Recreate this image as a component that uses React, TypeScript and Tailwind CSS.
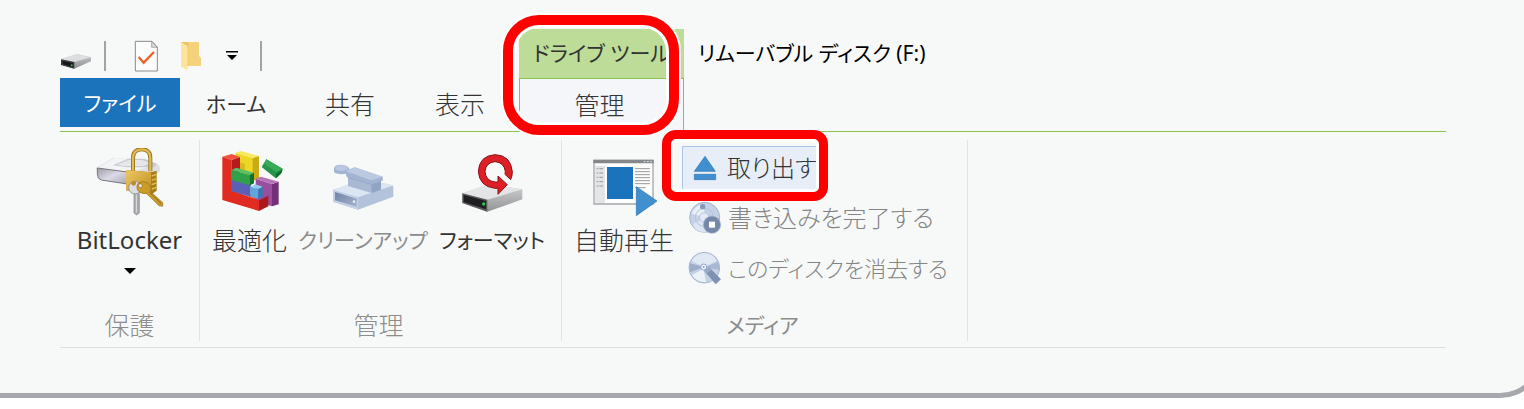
import type { ReactNode } from 'react';
import { clsx } from 'clsx';

const DriveSmallIcon = () => (
  <svg width="32" height="20" viewBox="33 64 96 60" aria-hidden="true">
    <defs>
      <linearGradient id="small-side" x1="0" x2="0" y1="0" y2="1">
        <stop offset="0" stopColor="#c9c9cb" />
        <stop offset="1" stopColor="#8f8f92" />
      </linearGradient>
    </defs>
    <path d="M36 86 84 70l42 10v12L76 114 36 103Z" fill="url(#small-side)" />
    <path d="M36 86 84 70l42 10-50 14Z" fill="#dddee0" />
    <path d="M36 86l40 8v20l-40-11Z" fill="#3c3c3e" />
    <path d="M41 91l31 7v11l-31-9Z" fill="#161616" />
    <circle cx="68" cy="104" r="3" fill="#2fb457" />
  </svg>
);

const DocumentCheckIcon = () => (
  <svg width="24" height="32" viewBox="247 31 72 96" aria-hidden="true">
    <path d="M251 35h50l16 17v72h-66Z" fill="#fcfcfc" stroke="#8b8b8b" strokeWidth="3" />
    <path d="M300 36v17h17Z" fill="#dcdcdc" stroke="#8b8b8b" strokeWidth="2" />
    <path d="M261 82l15 17 31-32" fill="none" stroke="#e8642c" strokeWidth="7" />
  </svg>
);

const FolderIcon = () => (
  <svg width="22" height="30" viewBox="387 38 66 90" aria-hidden="true">
    <path d="M390 41h53v42l6 5v25h-46l-13 2Z" fill="#ecc35c" />
    <path d="M412 41h31v42l6 5v25h-37Z" fill="#f3d27b" />
    <path d="M390 41l20 13v67l-3 5-17-12Z" fill="#fae49e" />
  </svg>
);

const BitLockerIcon = () => (
  <svg width="72" height="68" viewBox="40 24 216 204" aria-hidden="true">
    <defs>
      <linearGradient id="bl-front" x1="0" x2="1" y1="0" y2="1">
        <stop offset="0" stopColor="#9b9aa3" />
        <stop offset="0.5" stopColor="#dcdae8" />
        <stop offset="1" stopColor="#a7a6b0" />
      </linearGradient>
      <linearGradient id="bl-gold" x1="0" x2="1" y1="0" y2="1">
        <stop offset="0" stopColor="#ecc863" />
        <stop offset="1" stopColor="#bf8d20" />
      </linearGradient>
    </defs>
    <path d="M48 84 98 54l92 4 46 18 3 20-100 32-86-12Z" fill="#dfe0e3" />
    <path d="M48 84 98 54l92 4 40 16-90 24Z" fill="#f3f4f5" />
    <path d="M48 84 98 54" fill="none" stroke="#b9babd" strokeWidth="2" strokeDasharray="3 5" />
    <path d="M96 76l46-20h50l38 16-10 10h-80Z" fill="#c9cbd0" />
    <path d="M108 74l36-14h40l24 10-20 8h-60Z" fill="#e6e7ea" />
    <path d="M50 84l90 12v36l-78-12q-12-3-12-18Z" fill="url(#bl-front)" stroke="#77767e" strokeWidth="3" />
    <path d="M157 94V55q0-27 26-27t26 27v39" fill="none" stroke="#96701c" strokeWidth="12" />
    <path d="M157 94V55q0-27 26-27t26 27v39" fill="none" stroke="#e0ba52" strokeWidth="7" />
    <path d="M136 90l75 7 17-5v60l-17 12-75-13Z" fill="#a97c1a" />
    <path d="M136 90l75 7v67l-75-13Z" fill="url(#bl-gold)" />
    <path d="M213 108l14-5M213 121l14-5M213 134l14-5M213 147l14-5" stroke="#e3bd55" strokeWidth="4" />
    <path d="M160 158v61l8 6 8-6v-58Z" fill="#a9aaad" stroke="#85868a" strokeWidth="2" />
    <path d="M167 162v56" stroke="#e2e3e5" strokeWidth="3" />
    <circle cx="163" cy="143" r="19" fill="#dddee1" stroke="#96979b" strokeWidth="3" />
    <circle cx="159" cy="130" r="7" fill="#b98a26" />
    <path d="M172 130q12-10 27-2 14 8 11 27l36 33v11l-11-2-38-37q-19 2-27-11-4-10 2-19Z" fill="#cc9c2a" stroke="#94701a" strokeWidth="2" />
    <path d="M206 156l36 35" stroke="#8b6410" strokeWidth="3" />
    <circle cx="179" cy="137" r="6" fill="#e9e6da" stroke="#94701a" strokeWidth="2" />
  </svg>
);

const OptimizeIcon = () => (
  <svg width="72" height="68" viewBox="27 24 216 204" aria-hidden="true">
    <path d="M92 38l52 16v70l-52-16Z" fill="#eed627" />
    <path d="M143 54l19-6v66l-19 10Z" fill="#c8ab16" />
    <path d="M92 38l16-5 54 15-19 6Z" fill="#f8e95e" />
    <path d="M96 64l24 8v22H96Z" fill="#d6bb1b" />
    <path d="M79 60l26-9v100H79Z" fill="#b51a1c" />
    <path d="M52 50l28-8 25 9-26 9Z" fill="#f0533a" />
    <path d="M110 160l62 12 18-6-28 16Z" fill="#f0533a" />
    <path d="M152 116l49 16v67l-49-14Z" fill="#9a4f9e" />
    <path d="M201 132l20-7v68l-20 6Z" fill="#743078" />
    <path d="M152 116l16-6 53 15-20 7Z" fill="#b873b8" />
    <path d="M52 50l27 10v91l83 30v32L52 180Z" fill="#df2b20" />
    <path d="M162 181l28-14v32l-28 14Z" fill="#aa191d" />
    <path d="M78 118l59 16v36l-59-17Z" fill="#5a5fb8" />
    <path d="M137 140l23 7v29l-23-6Z" fill="#5aa8dc" />
    <path d="M160 146l13-6v31l-13 6Z" fill="#3479b5" />
    <path d="M137 140l14-7 22 7-13 7Z" fill="#8ecbef" />
    <path d="M79 90l54 14v32l-54-16Z" fill="#2fa14b" />
    <path d="M133 104l14-6v32l-14 7Z" fill="#14702f" />
    <path d="M79 90l15-7 53 15-14 6Z" fill="#5abf66" />
    <path d="M170 81l14-23 49 28-4 13-17 16Z" fill="#25964a" />
    <path d="M212 102l21-14-4 12-15 15Z" fill="#126d31" />
    <path d="M184 58l49 28-19 10-36-24Z" fill="#37ab58" />
  </svg>
);

const CleanupIcon = () => (
  <svg width="72" height="68" viewBox="27 24 216 204" aria-hidden="true">
    <defs>
      <linearGradient id="cl-front" x1="0" x2="1" y1="0" y2="1">
        <stop offset="0" stopColor="#7183a5" />
        <stop offset="1" stopColor="#a4b3ce" />
      </linearGradient>
    </defs>
    <path d="M45 150l76-26 90 8 15 6v32l-106 39-75-24Z" fill="#b4c3dc" />
    <path d="M45 150l76-26 90 8 13 5-104 35Z" fill="#dce5f2" />
    <path d="M45 150l75 22v37l-75-24Z" fill="#c3cfe3" />
    <path d="M51 156l65 20v24l-65-19Z" fill="url(#cl-front)" />
    <circle cx="108" cy="185" r="4" fill="#e4ecf8" />
    <path d="M90 106l70 20 29-6v29l-28 10-71-21Z" fill="#aab9d3" />
    <path d="M160 126l29-6v29l-28 10Z" fill="#92a4c4" />
    <path d="M90 106l70 20v8l-70-20Z" fill="#8ea1c2" />
    <path d="M48 84q2-10 22-10 20 1 25 14l15-6 84 28v12l-34 11-74-22-3-10-14 2q-22-2-21-9Z" fill="#a3b4d2" />
    <path d="M83 94l27-12 84 28-34 11Z" fill="#bccae1" />
    <ellipse cx="70" cy="84" rx="19" ry="9" fill="#b9c8e0" />
  </svg>
);

const FormatIcon = () => (
  <svg width="72" height="68" viewBox="402 24 216 204" aria-hidden="true">
    <defs>
      <linearGradient id="fm-side" x1="0" x2="0" y1="0" y2="1">
        <stop offset="0" stopColor="#d2d3d4" />
        <stop offset="1" stopColor="#929395" />
      </linearGradient>
    </defs>
    <path d="M421 160l80-27 100 15v30l-105 37-75-26Z" fill="url(#fm-side)" />
    <path d="M421 160l80-27 100 15-105 31Z" fill="#e3e4e5" />
    <path d="M421 160l75 19v36l-75-26Z" fill="#58585a" />
    <path d="M425 165l67 18v25l-67-22Z" fill="#1e1e20" />
    <circle cx="485" cy="192" r="5" fill="#2fc54b" />
    <path
      d="M549 103l17 16q5-10 5-24-5-50-52-51-47 3-50 50 3 46 50 51h9v18l28-29-28-26v18h-9q-28-3-30-32 3-27 30-29 27 2 31 29Z"
      fill="#dc2026"
      stroke="#8e1115"
      strokeWidth="3"
      strokeLinejoin="round"
    />
  </svg>
);

const AutoPlayIcon = () => (
  <svg width="72" height="68" viewBox="87 84 216 204" aria-hidden="true">
    <path d="M105 121h177v131H105Z" fill="#fdfdfd" stroke="#a5a7aa" strokeWidth="4" />
    <path d="M103 119h181v11H103Z" fill="#85888b" />
    <path d="M254 125h5M264 125h5M274 125h5" stroke="#eee" strokeWidth="3" />
    <path d="M108 137h30v112h-30Z" fill="#e3e5e6" />
    <path d="M113 146h5M121 146h11M113 159h5M121 159h11M113 172h5M121 172h11M113 185h5M121 185h11M113 198h5M121 198h11" stroke="#95989b" strokeWidth="3" />
    <path d="M228 146h45M228 155h45M228 164h45M228 173h45M228 182h45M228 191h45M228 203h32" stroke="#96989a" strokeWidth="3" />
    <path d="M144 141h78v96h-78Z" fill="#1b73bb" />
    <path d="M232 200l62 43-62 44Z" fill="#428fcf" stroke="#2b74b5" strokeWidth="2" />
  </svg>
);

const EjectIcon = () => (
  <svg width="24" height="26" viewBox="397 105 72 78" aria-hidden="true">
    <path d="M433 109l31 45h-63ZM401 163h64v16h-64Z" fill="#428fcf" stroke="#2b74b5" strokeWidth="2" />
  </svg>
);

const FinishBurnIcon = () => (
  <svg width="34" height="34" viewBox="53 36 102 102" aria-hidden="true">
    <circle cx="103" cy="85" r="45" fill="#c5d2e6" stroke="#a5b4cf" strokeWidth="3" />
    <path d="M64 74q10-26 36-29l3 40Z" fill="#e8eff8" />
    <path d="M107 130q-30 2-40-24l32-16Z" fill="#dde6f2" />
    <circle cx="102" cy="85" r="27" fill="none" stroke="#b6c4da" strokeWidth="3" />
    <circle cx="102" cy="85" r="14" fill="#e3eaf5" stroke="#b6c4da" strokeWidth="3" />
    <circle cx="97" cy="53" r="8" fill="#8497b8" />
    <circle cx="125" cy="107" r="26" fill="#7688aa" stroke="#a7b5ce" strokeWidth="2" />
    <path d="M116 98h18v18h-18Z" fill="#fff" />
  </svg>
);

const EraseDiscIcon = () => (
  <svg width="34" height="34" viewBox="52 183 102 102" aria-hidden="true">
    <circle cx="101" cy="233" r="46" fill="#c5d2e6" stroke="#a5b4cf" strokeWidth="3" />
    <path d="M63 213q14-24 38-24 25 1 37 23l-37 20Z" fill="#dfe8f3" />
    <path d="M58 220l43 11-42 16q-5-13-1-27Z" fill="#9eafcb" />
    <path d="M142 216l-41 15 44 9q3-12-3-24Z" fill="#a9b9d3" />
    <path d="M64 255l34-18 8 39q-28 2-42-21Z" fill="#edf2f9" />
    <circle cx="99" cy="231" r="9" fill="#f5f8fc" stroke="#91a3c1" strokeWidth="3" />
    <circle cx="99" cy="231" r="3" fill="#8496b5" />
    <path d="M101 243l14-12 36 37-16 15Z" fill="#7f92b3" />
    <path d="M101 243l14-12 8 8-16 12Z" fill="#9babc7" />
  </svg>
);

const Separator = () => <span className="h-[30px] w-0.5 bg-[#a3a3a3]" />;

// kanji labels are light at 25px, kana labels regular at 21px
const kanjiText = 'text-[25px] font-light';
const kanaText = 'text-[21px] font-normal';

type RibbonButtonProps = {
  icon: ReactNode;
  label: string;
  text?: string;
  disabled?: boolean;
  menu?: boolean;
};

const RibbonButton = ({ icon, label, text = kanjiText, disabled, menu }: RibbonButtonProps) => (
  <button
    type="button"
    disabled={disabled}
    className={clsx('flex flex-col items-center pt-0.5', disabled ? 'text-[#8c8c8c]' : 'text-[#333333]')}
  >
    {icon}
    <span className={clsx('mt-2 whitespace-nowrap leading-8', text)}>{label}</span>
    {menu && (
      <svg className="mt-3" width="12" height="6" viewBox="0 0 12 6" aria-hidden="true">
        <path d="M0 0h12L6 6Z" fill="#000" />
      </svg>
    )}
  </button>
);

const MediaButton = ({ icon, label, text = 'text-[24px]', disabled }: RibbonButtonProps) => (
  <button
    type="button"
    disabled={disabled}
    className="flex h-11 items-center gap-1.5 whitespace-nowrap pl-1.5 text-[#848484]"
  >
    {icon}
    <span className={text}>{label}</span>
  </button>
);

type RibbonGroupProps = {
  label: string;
  text?: string;
  className: string;
  children: ReactNode;
};

const RibbonGroup = ({ label, text = kanjiText, className, children }: RibbonGroupProps) => (
  <section
    aria-label={label}
    className={clsx('flex h-[201px] shrink-0 flex-col justify-between border-r border-[#e1e3e4]', className)}
  >
    <div className="flex pt-1.5">{children}</div>
    <p className={clsx('text-center leading-8 text-[#8c8c8c]', text)}>{label}</p>
  </section>
);

const tabClass = 'flex items-center justify-center text-[#333333]';

export default function App() {
  return (
    <div className="overflow-hidden bg-white pb-2.5 font-['Noto_Sans','Noto_Sans_CJK_JP',sans-serif] font-light [font-feature-settings:'palt']">
      <div className="-mr-5 rounded-br-[44px] border-r-5 border-b-5 border-[#a7a8ad] bg-[#f7f9f8] pt-[29px] pr-[93px] pb-[45px] pl-[60px]">
        <header className="flex">
          <div className="w-[459px] shrink-0">
            <div className="flex h-[49px] items-center pt-1">
              <span className="self-end pb-1.5">
                <DriveSmallIcon />
              </span>
              <span className="ml-3 flex">
                <Separator />
              </span>
              <button type="button" className="ml-7" aria-label="プロパティ">
                <DocumentCheckIcon />
              </button>
              <button type="button" className="ml-[22px]" aria-label="新しいフォルダー">
                <FolderIcon />
              </button>
              <button type="button" className="ml-6" aria-label="クイック アクセス ツール バーのカスタマイズ">
                <svg width="12" height="12" viewBox="0 0 12 12">
                  <path d="M0 1h12v1.5H0ZM1 5h10l-5 5Z" fill="#000" />
                </svg>
              </button>
              <span className="ml-[22px] flex">
                <Separator />
              </span>
            </div>
            <nav className="flex h-[54px] border-b border-[#8cc152]">
              <button type="button" className={clsx('mb-1 w-[120px] bg-[#1b73bb] pt-0.5 text-white', kanaText)}>
                ファイル
              </button>
              <button type="button" className={clsx(tabClass, 'w-[112px]', kanaText)}>
                ホーム
              </button>
              <button type="button" className={clsx(tabClass, 'w-[116px]', kanjiText)}>
                共有
              </button>
              <button type="button" className={clsx(tabClass, 'w-[104px]', kanjiText)}>
                表示
              </button>
            </nav>
          </div>
          <div className="relative w-[165px] shrink-0">
            <div
              className={clsx(
                'flex h-[49px] items-center justify-center bg-[#bddc98] whitespace-nowrap text-[#333333]',
                kanaText,
              )}
            >
              ドライブ ツール
            </div>
            <button
              type="button"
              className={clsx(
                'h-[54px] w-full border-x border-t border-[#8cc152] bg-[#f5f6fa] pr-1 text-[#333333]',
                kanjiText,
              )}
            >
              管理
            </button>
            <div className="pointer-events-none absolute -top-3.5 -left-4 z-10 h-[120px] w-44 rounded-[36px] border-10 border-[#fe0000] shadow-[inset_0_0_0_3px_#fff,0_0_0_2px_#fff]" />
          </div>
          <div className="flex min-w-0 flex-1 flex-col border-b border-[#8cc152]">
            <h1 className={clsx('flex h-[49px] items-center pl-3.5 whitespace-nowrap text-black', kanaText)}>
              リムーバブル ディスク (F:)
            </h1>
          </div>
        </header>
        <main className="flex border-b border-[#dcdedf] pt-2 pb-1.5">
          <RibbonGroup label="保護" className="w-[140px]">
            <div className="flex flex-1 justify-center">
              <RibbonButton icon={<BitLockerIcon />} label="BitLocker" text="text-[24px] font-normal" menu />
            </div>
          </RibbonGroup>
          <RibbonGroup label="管理" className="w-[362px] [&>p]:pr-1">
            <div className="flex flex-1 items-start pl-3">
              <RibbonButton icon={<OptimizeIcon />} label="最適化" />
              <div className="flex w-[152px] justify-center">
                <RibbonButton icon={<CleanupIcon />} label="クリーンアップ" text={kanaText} disabled />
              </div>
              <RibbonButton icon={<FormatIcon />} label="フォーマット" text={kanaText} />
            </div>
          </RibbonGroup>
          <RibbonGroup label="メディア" text={kanaText} className="w-[406px] [&>p]:pr-1">
            <div className="flex flex-1 items-start pl-3">
              <RibbonButton icon={<AutoPlayIcon />} label="自動再生" />
              <div className="ml-2 flex flex-col items-start gap-1.5">
                <div className="relative">
                  <button
                    type="button"
                    className="flex h-11 w-[138px] items-center gap-2.5 border border-[#a9c8e8] bg-[#e7eef7] pl-2.5 text-[24px] whitespace-nowrap text-[#333333]"
                  >
                    <EjectIcon />
                    取り出す
                  </button>
                  <div className="pointer-events-none absolute -top-4 -left-5 h-[71px] w-[166px] rounded-[14px] border-9 border-[#fe0000] shadow-[inset_0_0_0_3px_#fff]" />
                </div>
                <MediaButton icon={<FinishBurnIcon />} label="書き込みを完了する" disabled />
                <MediaButton icon={<EraseDiscIcon />} label="このディスクを消去する" text="text-[22px]" disabled />
              </div>
            </div>
          </RibbonGroup>
        </main>
      </div>
    </div>
  );
}
